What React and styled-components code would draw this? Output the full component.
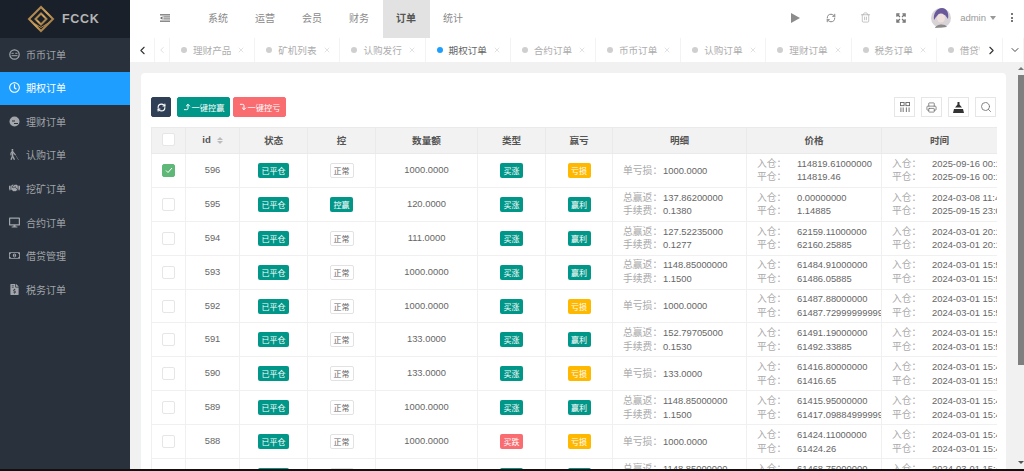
import React from 'react';
import styled, { createGlobalStyle } from 'styled-components';
import { ChevronLeft, ChevronRight, ChevronDown, RefreshCw, Printer, Search, CornerRightUp, CornerRightDown, Trash2, X } from 'lucide-react';
import { FaRegClock, FaBlind, FaDesktop, FaRegMoneyBillAlt, FaHandshake, FaFileInvoiceDollar } from 'react-icons/fa';

const Global = createGlobalStyle`
  html, body { margin: 0; padding: 0; height: 471px; overflow: hidden; background: #111; }
  body, table, button { font-family: "Liberation Sans", "Noto Sans CJK SC", sans-serif; }
  * { box-sizing: border-box; }
`;

const Page = styled.div`display: flex; width: 1024px; height: 469px; overflow: hidden; background: #f1f1f1;`;
const Sidebar = styled.aside`width: 130px; flex: none; background: #28313c; display: flex; flex-direction: column;`;
const Logo = styled.div`height: 38px; background: #1a2029; display: flex; align-items: center; gap: 7px; padding: 0 0 1px 27px;
  color: #b4b4b4; font-size: 12.5px; font-weight: 700; letter-spacing: .7px;`;
const SideItem = styled.div`height: 33.55px; display: flex; align-items: center; padding: 0 0 1px 9px; gap: 6px; font-size: 10px;
  color: ${p => (p.$active ? '#fff' : '#a2a5a9')}; background: ${p => (p.$active ? '#1e9fff' : 'transparent')};`;
const IconSlot = styled.span`width: 11px; height: 11px; display: flex; align-items: center; justify-content: center; flex: none;`;

const Main = styled.div`flex: 1; min-width: 0; display: flex; flex-direction: column;`;
const TopNav = styled.header`height: 38px; flex: none; background: #fff; display: flex; align-items: stretch;`;
const Shrink = styled.div`width: 64.5px; flex: none; display: flex; align-items: center; justify-content: center; padding: 0 0 3px 6px;`;
const NavItem = styled.div`width: 47px; height: 38px; display: flex; align-items: center; justify-content: center; font-size: 10px; padding-bottom: 3px;
  color: ${p => (p.$active ? '#555' : '#8a8a8a')}; font-weight: ${p => (p.$active ? 700 : 400)};
  background: ${p => (p.$active ? '#e2e2e2' : 'transparent')};`;
const NavRight = styled.div`margin-left: auto; display: flex; align-items: center; color: #888; padding-bottom: 3px;`;
const NavIcon = styled.div`width: 35px; display: flex; justify-content: center;`;
const User = styled.div`display: flex; align-items: center; font-size: 9.5px; color: #999; margin-left: 13px; gap: 4px;`;
const UserPhoto = styled.span`display: flex; margin-right: 5px;`;
const Caret = styled.span`width: 0; height: 0; border: 3.5px solid transparent; border-top: 4px solid #999; border-bottom: 0;`;
const Kebab = styled.div`width: 24px; display: flex; flex-direction: column; align-items: center; gap: 1.5px; margin-left: 4px;`;
const KebabDot = styled.i`width: 2px; height: 2px; background: #777;`;

const Tabs = styled.nav`height: 24px; flex: none; background: #fff; display: flex; align-items: center; overflow: hidden;`;
const ArrowCell = styled.div`width: ${p => p.$w}px; height: 24px; flex: none; display: flex; align-items: center; justify-content: center;
  padding-left: ${p => p.$pl || 0}px; color: ${p => p.$c || '#333'}; border-right: 1px solid #f3f3f3; background: #fff;`;
const TabStrip = styled.div`flex: 1; min-width: 0; overflow: hidden; display: flex;`;
const Tab = styled.div`width: 85.2px; flex: none; height: 24px; display: flex; align-items: center; padding-left: 11px; gap: 6px; border-right: 1px solid #f3f3f3;
  font-size: 9.6px; color: ${p => (p.$active ? '#666' : '#adadad')};`;
const Dot = styled.span`width: 6px; height: 6px; border-radius: 50%; flex: none; background: ${p => (p.$active ? '#1e9fff' : '#cfcfcf')};`;
const TabClose = styled.span`display: flex; color: #c4c4c4;`;

const Body = styled.div`flex: 1; min-height: 0; display: flex;`;
const Scroller = styled.div`flex: 1; min-width: 0; padding: 11px 11px 0 11px; overflow: hidden;`;
const Card = styled.section`background: #fff; border-radius: 4px 4px 0 0; padding: 24px 10px 0; height: 500px;`;
const Toolbar = styled.div`display: flex; align-items: center; height: 20px; margin-bottom: 10px; gap: 3px;`;
const Btn = styled.button`height: 20px; width: ${p => p.$w}px; padding: 0; border: 1px solid ${p => p.$bg}; border-radius: 2px; background: ${p => p.$bg}; color: #fff;
  font-size: 8.2px; display: flex; align-items: center; justify-content: center; gap: 1px;`;
const GapBtn = styled(Btn)`margin-right: 3px;`;
const ToolRight = styled.div`margin-left: auto; display: flex; gap: 6px;`;
const IconBtn = styled.div`width: 21px; height: 20px; border: 1px solid #e6e6e6; display: flex; align-items: center; justify-content: center; color: #666;`;

const TableWrap = styled.div`width: 846px; overflow: hidden;`;
const Table = styled.table`border-collapse: collapse; table-layout: fixed; width: 846px; border: 1px solid #eee; color: #666; font-size: 9.4px;`;
const Th = styled.th`height: 26px; background: #f2f2f2; border: 1px solid #eaeaea; color: #555; font-size: 9.6px; font-weight: 700; padding: 0 0 2px; text-align: center;`;
const Td = styled.td`height: 33.9px; border: 1px solid #f0f0f0; padding: 0; text-align: center; overflow: hidden; white-space: nowrap;`;
const NumTd = styled(Td)`padding-bottom: 2px;`;
const Check = styled.span`display: inline-flex; width: 13px; height: 13px; border-radius: 2px; vertical-align: middle; align-items: center; justify-content: center;
  border: 1px solid ${p => (p.$on ? '#5fb878' : '#e6e6e6')}; background: ${p => (p.$on ? '#5fb878' : '#fff')};`;
const Sort = styled.span`display: inline-flex; flex-direction: column; gap: 1px; margin-left: 6px; vertical-align: middle;`;
const SortUp = styled.i`width: 0; height: 0; border: 3px solid transparent; border-bottom: 3px solid #bbb; border-top: 0;`;
const SortDown = styled.i`width: 0; height: 0; border: 3px solid transparent; border-top: 3px solid #bbb; border-bottom: 0;`;
const Badge = styled.span`display: inline-flex; align-items: center; justify-content: center; height: 15px; width: ${p => p.$w || 23}px; border-radius: 2px; font-size: 8px;
  background: ${p => p.$bg}; color: #fff; vertical-align: middle;`;
const Plain = styled(Badge)`background: #fff; color: #666; border: 1px solid #e2e2e2; width: 24px;`;
const Lines = styled.div`padding-left: 10px; line-height: 13.7px; text-align: left; overflow: hidden;`;
const Line = styled.div`display: flex; white-space: nowrap;`;
const Label = styled.span`width: ${p => p.$w}px; flex: none; color: #aaa; font-size: 9.8px;`;

const LogoMark = () => (
  <svg width="28" height="28" viewBox="0 0 28 28" fill="none">
    <defs>
      <linearGradient id="g" x1="0" y1="0" x2="1" y2="1"><stop offset="0" stopColor="#8a6a3c" /><stop offset=".5" stopColor="#d9a860" /><stop offset="1" stopColor="#7e5e34" /></linearGradient>
    </defs>
    <path d="M14 2 L26 14 L14 26 L2 14 Z" stroke="url(#g)" strokeWidth="2" />
    <path d="M14 8.5 L19.5 14 L14 19.500 L8.5 14 Z" stroke="url(#g)" strokeWidth="2" />
    <path d="M5 17 L14 22.5 L23 17" stroke="#b58a4e" strokeWidth="1" />
  </svg>
);
const CoinIcon = () => (
  <svg width="11" height="11" viewBox="0 0 11 11" fill="none" stroke="#a2a5a9">
    <circle cx="5.5" cy="5.5" r="4.7" strokeWidth="1.2" /><path d="M2.5 4.3h2.2M6.3 4.3h2.2M2.5 6.7h6" strokeWidth="1" />
  </svg>
);
const FundIcon = () => (
  <svg width="11" height="11" viewBox="0 0 11 11"><circle cx="5.5" cy="5.5" r="5" fill="#a2a5a9" /><path d="M3 5h3M5 7.5h4" stroke="#28313c" strokeWidth="1.2" /></svg>
);
const ShrinkIcon = () => (
  <svg width="10" height="8" viewBox="0 0 12 9" fill="#666"><rect width="12" height="1.4" /><rect x="4" y="2.6" width="8" height="1.2" /><rect x="4" y="5" width="8" height="1.2" /><rect y="7.6" width="12" height="1.4" /><path d="M3 2.5v4L0 4.5z" /></svg>
);
const Play = () => <svg width="9" height="10" viewBox="0 0 9 10" fill="#8c8c8c"><path d="M0 0l9 5-9 5z" /></svg>;
const Full = () => (
  <svg width="10" height="10" viewBox="0 0 11 11" fill="none" stroke="#777" strokeWidth="1.5"><path d="M1 4V1h3M7 1h3v3M10 7v3H7M4 10H1V7M2 2l2.3 2.3M9 2L6.7 4.3M9 9L6.7 6.7M2 9l2.3-2.3" /></svg>
);
const Avatar = () => (
  <svg width="20" height="20" viewBox="0 0 20 20">
    <circle cx="10" cy="10" r="10" fill="#d8d3d6" />
    <path d="M3 12C2 5 6 0 11 0s7 5 6 11l-3-4-6-1-3 3z" fill="#6a5a9c" />
    <ellipse cx="10" cy="10" rx="4" ry="4.5" fill="#efe0dc" />
    <path d="M4 20c1-4 10-5 12-1z" fill="#8c8a88" />
  </svg>
);
const Grid = () => (
  <svg width="10" height="10" viewBox="0 0 11 11" fill="none" stroke="#666"><rect x=".5" y=".5" width="4" height="3.5" /><rect x="6.5" y=".5" width="4" height="3.5" /><path d="M1 6v5M3.500 6v5M7 6v5M10 6v5" /></svg>
);
const Export = () => (
  <svg width="11" height="11" viewBox="0 0 11 11" fill="#333"><path d="M4.5 0h2v2.500l2.500 3H2l2.500-3z" /><path d="M1 7h9l1 4H0z" /></svg>
);
const Tick = () => <svg width="8" height="7" viewBox="0 0 8 7" fill="none" stroke="#fff"><path d="M1 3.500L3 5.500 7 1" /></svg>;

const menu = [
  ['币币订单', <CoinIcon />], ['期权订单', <FaRegClock size={11} color="#fff" />, true], ['理财订单', <FundIcon />],
  ['认购订单', <FaBlind size={11} />], ['挖矿订单', <FaHandshake size={12} />], ['合约订单', <FaDesktop size={11} />],
  ['借贷管理', <FaRegMoneyBillAlt size={11} />], ['税务订单', <FaFileInvoiceDollar size={11} />],
];
const navs = ['系统', '运营', '会员', '财务', '订单', '统计'];
const tabs = ['理财产品', '矿机列表', '认购发行', '期权订单', '合约订单', '币币订单', '认购订单', '理财订单', '税务订单', '借贷管理'];
const GREEN = '#009688', GOLD = '#ffb800', RED = '#f96c70';

const rows = [
  { id: 596, ctl: 0, qty: '1000.0000', win: 0, d: ['1000.0000'], p: ['114819.61000000', '114819.46'], t: ['2025-09-16 00:12:08', '2025-09-16 00:13:08'], on: true },
  { id: 595, ctl: 1, qty: '120.0000', win: 1, d: ['137.86200000', '0.1380'], p: ['0.00000000', '1.14885'], t: ['2024-03-08 11:42:10', '2025-09-15 23:01:10'] },
  { id: 594, ctl: 0, qty: '111.0000', win: 1, d: ['127.52235000', '0.1277'], p: ['62159.11000000', '62160.25885'], t: ['2024-03-01 20:12:41', '2024-03-01 20:13:41'] },
  { id: 593, ctl: 0, qty: '1000.0000', win: 1, d: ['1148.85000000', '1.1500'], p: ['61484.91000000', '61486.05885'], t: ['2024-03-01 15:52:41', '2024-03-01 15:53:41'] },
  { id: 592, ctl: 0, qty: '1000.0000', win: 0, d: ['1000.0000'], p: ['61487.88000000', '61487.72999999999'], t: ['2024-03-01 15:51:41', '2024-03-01 15:52:41'] },
  { id: 591, ctl: 0, qty: '133.0000', win: 1, d: ['152.79705000', '0.1530'], p: ['61491.19000000', '61492.33885'], t: ['2024-03-01 15:50:41', '2024-03-01 15:51:41'] },
  { id: 590, ctl: 0, qty: '133.0000', win: 0, d: ['133.0000'], p: ['61416.80000000', '61416.65'], t: ['2024-03-01 15:49:41', '2024-03-01 15:50:41'] },
  { id: 589, ctl: 0, qty: '1000.0000', win: 1, d: ['1148.85000000', '1.1500'], p: ['61415.95000000', '61417.09884999999'], t: ['2024-03-01 15:48:41', '2024-03-01 15:49:41'] },
  { id: 588, ctl: 0, qty: '1000.0000', win: 0, down: true, d: ['1000.0000'], p: ['61424.11000000', '61424.26'], t: ['2024-03-01 15:47:41', '2024-03-01 15:48:41'] },
  { id: 587, ctl: 0, qty: '1000.0000', win: 1, d: ['1148.85000000', '1.1500'], p: ['61468.75000000', '61469.89885'], t: ['2024-03-01 15:46:41', '2024-03-01 15:47:41'] },
];
const cols = [34, 54, 68, 68, 102, 68, 67, 134, 135, 116];
const heads = ['状态', '控', '数量额', '类型', '赢亏', '明细', '价格', '时间'];

const ScrollTrack = styled.div`width: 7px; flex: none; position: relative; background: #f1f1f1;`;
const Thumb = styled.div`position: absolute; left: 1px; right: 0; top: 13px; height: 290px; background: #7f7f7f;`;
const ArrowUp = styled.i`position: absolute; right: 0; top: 5px; border: 3px solid transparent; border-bottom: 3px solid #777; border-top: 0;`;
const ArrowDown = styled.i`position: absolute; right: 0; bottom: 5px; border: 3px solid transparent; border-top: 3px solid #555; border-bottom: 0;`;

export default function App() {
  return (
    <>
      <Global />
      <Page>
        <Sidebar>
          <Logo><LogoMark /><span>FCCK</span></Logo>
          {menu.map(([name, icon, active]) => (
            <SideItem key={name} $active={active}><IconSlot>{icon}</IconSlot>{name}</SideItem>
          ))}
        </Sidebar>
        <Main>
          <TopNav>
            <Shrink><ShrinkIcon /></Shrink>
            {navs.map(n => <NavItem key={n} $active={n === '订单'}>{n}</NavItem>)}
            <NavRight>
              <NavIcon><Play /></NavIcon>
              <NavIcon><RefreshCw size={10} strokeWidth={2.4} /></NavIcon>
              <NavIcon><Trash2 size={11} strokeWidth={1.5} color="#aaa" /></NavIcon>
              <NavIcon><Full /></NavIcon>
              <User><UserPhoto><Avatar /></UserPhoto><span>admin</span><Caret /></User>
              <Kebab><KebabDot /><KebabDot /><KebabDot /></Kebab>
            </NavRight>
          </TopNav>
          <Tabs>
            <ArrowCell $w={25}><ChevronLeft size={13} strokeWidth={2} /></ArrowCell>
            <ArrowCell $w={15} $c="#ccc"><ChevronLeft size={10} strokeWidth={1.5} /></ArrowCell>
            <TabStrip>
              {tabs.map(t => (
                <Tab key={t} $active={t === '期权订单'}>
                  <Dot $active={t === '期权订单'} />{t}
                  <TabClose><X size={8} strokeWidth={1.5} /></TabClose>
                </Tab>
              ))}
            </TabStrip>
            <ArrowCell $w={23}><ChevronRight size={13} strokeWidth={2} /></ArrowCell>
            <ArrowCell $w={21} $pl={4}><ChevronDown size={12} strokeWidth={1.8} /></ArrowCell>
          </Tabs>
          <Body>
            <Scroller>
              <Card>
                <Toolbar>
                  <GapBtn $w={20} $bg="#2f4056"><RefreshCw size={9} strokeWidth={3} /></GapBtn>
                  <Btn $w={53} $bg={GREEN}><CornerRightUp size={8} strokeWidth={3} />一键控赢</Btn>
                  <Btn $w={53} $bg={RED}><CornerRightDown size={8} strokeWidth={3} />一键控亏</Btn>
                  <ToolRight>
                    <IconBtn><Grid /></IconBtn>
                    <IconBtn><Printer size={11} strokeWidth={1.6} /></IconBtn>
                    <IconBtn><Export /></IconBtn>
                    <IconBtn><Search size={12} strokeWidth={1.8} color="#777" /></IconBtn>
                  </ToolRight>
                </Toolbar>
                <TableWrap>
                  <Table>
                    <colgroup>{cols.map((w, i) => <col key={i} width={w} />)}</colgroup>
                    <thead>
                      <tr>
                        <Th><Check /></Th>
                        <Th>id<Sort><SortUp /><SortDown /></Sort></Th>
                        {heads.map(h => <Th key={h}>{h}</Th>)}
                      </tr>
                    </thead>
                    <tbody>
                      {rows.map(r => (
                        <tr key={r.id}>
                          <Td><Check $on={r.on}>{r.on && <Tick />}</Check></Td>
                          <NumTd>{r.id}</NumTd>
                          <Td><Badge $w={31} $bg={GREEN}>已平仓</Badge></Td>
                          <Td>{r.ctl ? <Badge $bg={GREEN}>控赢</Badge> : <Plain as="span">正常</Plain>}</Td>
                          <NumTd>{r.qty}</NumTd>
                          <Td><Badge $bg={r.down ? RED : GREEN}>{r.down ? '买跌' : '买涨'}</Badge></Td>
                          <Td><Badge $bg={r.win ? GREEN : GOLD}>{r.win ? '赢利' : '亏损'}</Badge></Td>
                          <Td>
                            <Lines>
                              {r.d.length === 1
                                ? <Line><Label $w={40}>单亏损：</Label>{r.d[0]}</Line>
                                : <>
                                    <Line><Label $w={40}>总赢返：</Label>{r.d[0]}</Line>
                                    <Line><Label $w={40}>手续费：</Label>{r.d[1]}</Line>
                                  </>}
                            </Lines>
                          </Td>
                          <Td>
                            <Lines>
                              <Line><Label $w={40}>入仓：</Label>{r.p[0]}</Line>
                              <Line><Label $w={40}>平仓：</Label>{r.p[1]}</Line>
                            </Lines>
                          </Td>
                          <Td>
                            <Lines>
                              <Line><Label $w={40}>入仓：</Label>{r.t[0]}</Line>
                              <Line><Label $w={40}>平仓：</Label>{r.t[1]}</Line>
                            </Lines>
                          </Td>
                        </tr>
                      ))}
                    </tbody>
                  </Table>
                </TableWrap>
              </Card>
            </Scroller>
            <ScrollTrack><ArrowUp /><Thumb /><ArrowDown /></ScrollTrack>
          </Body>
        </Main>
      </Page>
    </>
  );
}
